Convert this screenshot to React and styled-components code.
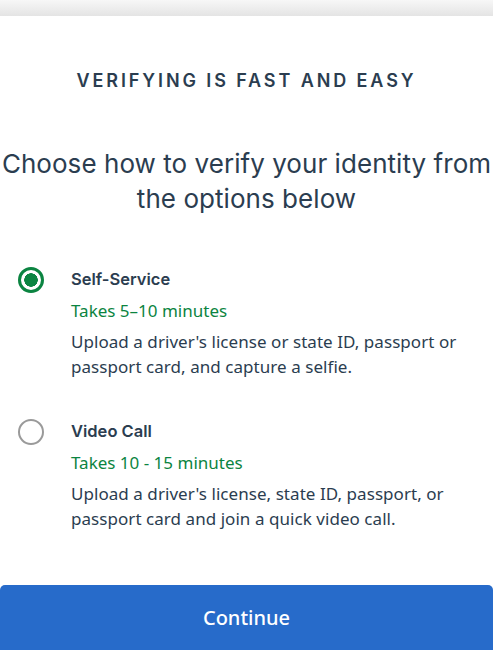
import React, { useState } from 'react'
import styled, { createGlobalStyle } from 'styled-components'

const options = [
  {
    id: 'self',
    title: 'Self-Service',
    time: 'Takes 5–10 minutes',
    text: "Upload a driver's license or state ID, passport or passport card, and capture a selfie.",
  },
  {
    id: 'video',
    title: 'Video Call',
    time: 'Takes 10 - 15 minutes',
    text: "Upload a driver's license, state ID, passport, or passport card and join a quick video call.",
  },
]

const App = () => {
  const [picked, setPicked] = useState('self')

  return (
    <Page>
      <GlobalStyle />
      <TopBar />
      <Content>
        <Eyebrow>Verifying is fast and easy</Eyebrow>
        <Title>
          <TitleLine>Choose how to verify your identity from</TitleLine>
          <TitleLine>the options below</TitleLine>
        </Title>
        <OptionList>
          {options.map((o) => (
            <Option key={o.id} onClick={() => setPicked(o.id)}>
              <Radio $checked={picked === o.id} />
              <OptionBody>
                <OptionTitle>{o.title}</OptionTitle>
                <OptionTime>{o.time}</OptionTime>
                <OptionText>{o.text}</OptionText>
              </OptionBody>
            </Option>
          ))}
        </OptionList>
      </Content>
      <ContinueButton>Continue</ContinueButton>
    </Page>
  )
}

const GlobalStyle = createGlobalStyle`
body{
  margin: 0;
  background: #fff;
  font-family: "Noto Sans", sans-serif;
}
`
const Page = styled.div`
width: 493px;
height: 650px;
display: flex;
flex-direction: column;
overflow: hidden;
`
const TopBar = styled.div`
height: 16px;
flex-shrink: 0;
background: linear-gradient(#f7f7f7, #e4e4e4);
`
const Content = styled.div`
flex: 1;
display: flex;
flex-direction: column;
`
const Eyebrow = styled.h2`
margin: 53px 0 0;
text-align: center;
font-family: Inter, sans-serif;
font-size: 18px;
font-weight: 600;
letter-spacing: 2.9px;
text-transform: uppercase;
color: #2b3d50;
line-height: 24px;
`
const Title = styled.h1`
margin: 53px 0 0;
display: flex;
flex-direction: column;
align-items: center;
font-family: Inter, sans-serif;
font-size: 26px;
font-weight: 400;
line-height: 35px;
color: #2b3d50;
`
const TitleLine = styled.span`
white-space: nowrap;
letter-spacing: 0.05px;
`
const OptionList = styled.div`
display: flex;
flex-direction: column;
gap: 39px;
margin-top: 50px;
padding: 0 18px;
`
const Option = styled.div`
display: flex;
gap: 27px;
cursor: pointer;
`
const Radio = styled.span`
box-sizing: border-box;
flex-shrink: 0;
width: 26px;
height: 26px;
margin-top: 1px;
border-radius: 50%;
border: ${(p) => (p.$checked ? '3.5px solid #0b8441' : '2px solid #9a9a9a')};
background: ${(p) => (p.$checked ? 'radial-gradient(circle, #0b8441 0 6.5px, #fff 7px)' : '#fff')};
`
const OptionBody = styled.div`
display: flex;
flex-direction: column;
`
const OptionTitle = styled.div`
font-family: Inter, sans-serif;
font-size: 16.5px;
font-weight: 600;
line-height: 26px;
color: #2b3d50;
`
const OptionTime = styled.div`
margin-top: 6px;
font-size: 17px;
line-height: 26px;
color: #0b8441;
`
const OptionText = styled.div`
margin-top: 5px;
font-size: 17px;
letter-spacing: 0.05px;
line-height: 25px;
color: #2b3d50;
`
const ContinueButton = styled.button`
flex-shrink: 0;
height: 65px;
width: 100%;
border: none;
border-radius: 5px 5px 0 0;
background: #276bca;
color: #fff;
font-family: "Noto Sans", sans-serif;
font-size: 20px;
font-weight: 500;
cursor: pointer;
`

export default App
